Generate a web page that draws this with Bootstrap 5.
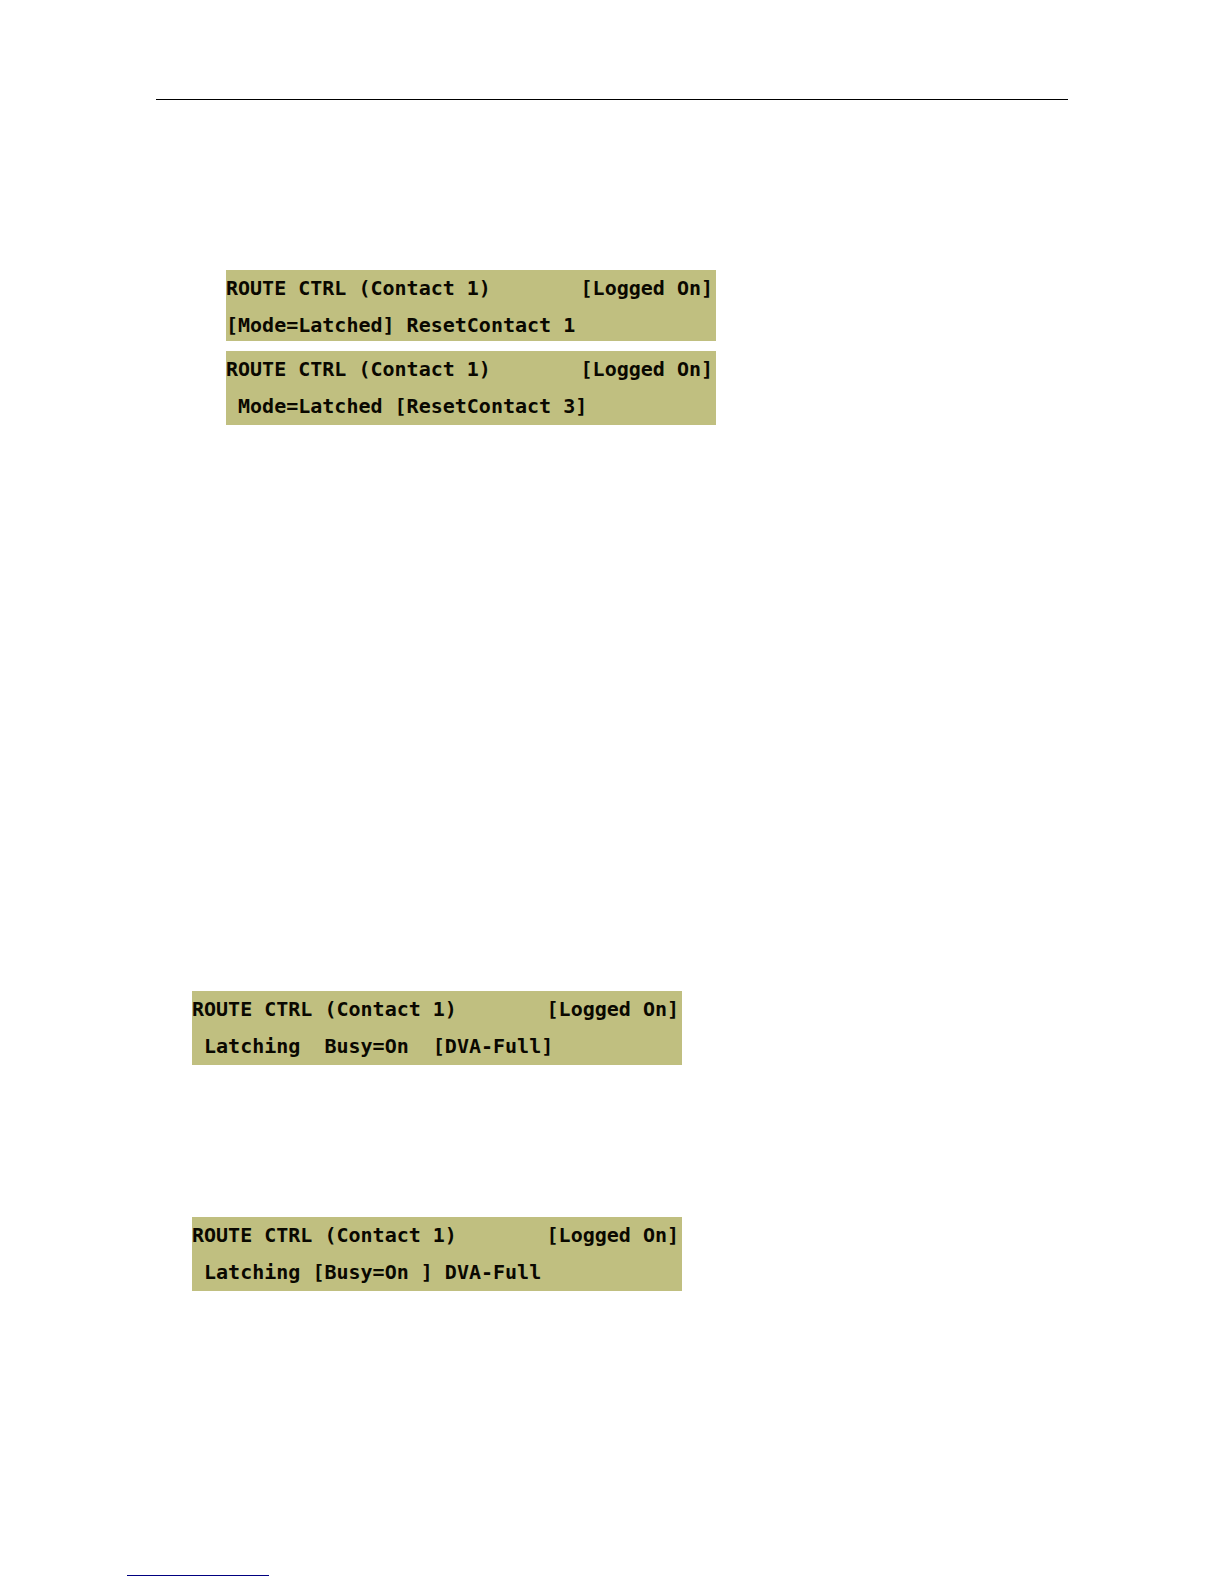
<!DOCTYPE html>
<html lang="en">
<head>
<meta charset="utf-8">
<meta name="viewport" content="width=device-width, initial-scale=1">
<title>Route Control</title>
<link href="https://cdn.jsdelivr.net/npm/bootstrap@5.3.0/dist/css/bootstrap.min.css" rel="stylesheet">
<style>
  .manual { padding: 99px 156px 0; }
  .head-rule { height: 1px; background: #000; }
  .steps { padding: 170px 0 0 70px; gap: 10px; }
  .options { padding: 566px 0 0 36px; gap: 152px; }
  .lcd {
    width: 490px;
    max-width: 100%;
    padding-right: 3px;
    background: #c0bf80;
    color: #0a0800;
    font: bold 20px/37px "DejaVu Sans Mono", monospace;
  }
  .lcd-short { height: 71px; }
  .lcd-line { white-space: pre; }
  .foot-rule { width: 142px; height: 1px; margin: 284px 0 8px 127px; background: #000080; }
</style>
<script src="https://cdn.jsdelivr.net/npm/bootstrap@5.3.0/dist/js/bootstrap.bundle.min.js"></script>
</head>
<body class="bg-white">
<main class="manual">
  <div class="head-rule"></div>
  <section class="steps d-flex flex-column">
    <div class="lcd lcd-short">
      <div class="lcd-line d-flex justify-content-between"><span>ROUTE CTRL (Contact 1)</span><span>[Logged On]</span></div>
      <div class="lcd-line">[Mode=Latched] ResetContact 1</div>
    </div>
    <div class="lcd">
      <div class="lcd-line d-flex justify-content-between"><span>ROUTE CTRL (Contact 1)</span><span>[Logged On]</span></div>
      <div class="lcd-line"> Mode=Latched [ResetContact 3]</div>
    </div>
  </section>
  <section class="options d-flex flex-column">
    <div class="lcd">
      <div class="lcd-line d-flex justify-content-between"><span>ROUTE CTRL (Contact 1)</span><span>[Logged On]</span></div>
      <div class="lcd-line"> Latching  Busy=On  [DVA-Full]</div>
    </div>
    <div class="lcd">
      <div class="lcd-line d-flex justify-content-between"><span>ROUTE CTRL (Contact 1)</span><span>[Logged On]</span></div>
      <div class="lcd-line"> Latching [Busy=On ] DVA-Full</div>
    </div>
  </section>
</main>
<footer><div class="foot-rule"></div></footer>
</body>
</html>
